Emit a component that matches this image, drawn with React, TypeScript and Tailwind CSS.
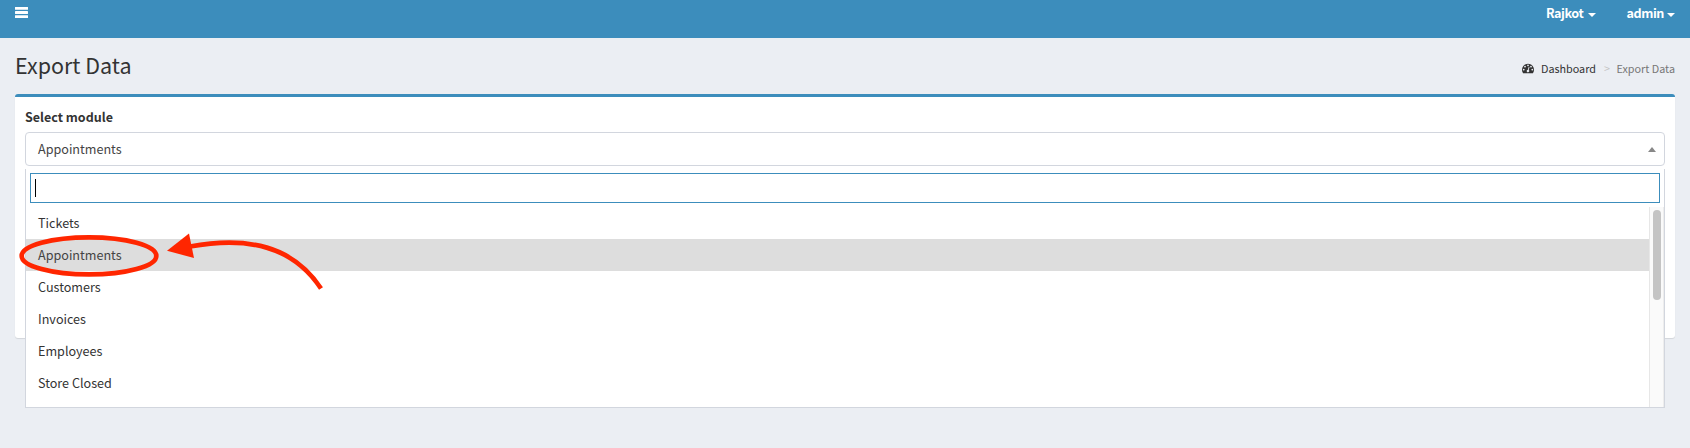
import React from "react";

const modules = ["Tickets", "Appointments", "Customers", "Invoices", "Employees", "Store Closed"];

function Caret({ className = "" }: { className?: string }) {
  return <span className={`inline-block h-0 w-0 border-x-4 border-t-4 border-x-transparent border-t-white ${className}`} />;
}

function MenuIcon() {
  return (
    <svg viewBox="0 0 13 11" className="mt-[7px] h-[11px] w-[13px]" fill="currentColor">
      <rect width="13" height="2.800" rx="0.300" />
      <rect y="4.100" width="13" height="2.800" rx="0.300" />
      <rect y="8.200" width="13" height="2.800" rx="0.300" />
    </svg>
  );
}

function DashboardIcon() {
  return (
    <svg viewBox="0 0 1792 1792" className="h-3 w-3" fill="currentColor">
      <path d="M384 1152q0-53-37.500-90.500t-90.500-37.500-90.500 37.500-37.500 90.500 37.500 90.500 90.500 37.500 90.500-37.500 37.500-90.500zm192-448q0-53-37.500-90.500t-90.500-37.500-90.500 37.500-37.500 90.500 37.500 90.500 90.500 37.500 90.500-37.500 37.500-90.500zm428 481l101-382q6-26-7.500-48.500t-38.500-29.500-48 6.500-30 39.500l-101 382q-60 5-107 43.500t-63 98.500q-20 77 20 146t117 89 146-20 89-117q16-60-6-117t-72-91zm660-33q0-53-37.500-90.500t-90.500-37.500-90.500 37.500-37.500 90.500 37.500 90.500 90.500 37.500 90.500-37.500 37.500-90.500zm-640-640q0-53-37.500-90.500t-90.500-37.500-90.500 37.500-37.500 90.500 37.500 90.500 90.500 37.500 90.500-37.500 37.500-90.500zm448 192q0-53-37.500-90.500t-90.500-37.500-90.500 37.500-37.500 90.500 37.500 90.500 90.500 37.500 90.500-37.500 37.500-90.500zm320 448q0 261-141 483-19 29-54 29h-1402q-35 0-54-29-141-221-141-483 0-182 71-348t191-286 286-191 348-71 348 71 286 191 191 286 71 348z" />
    </svg>
  );
}

function Annotation() {
  return (
    <svg className="pointer-events-none absolute left-0 top-[220px] h-20 w-[340px]" viewBox="0 220 340 80" fill="none" stroke="#ff2600">
      <ellipse cx="89" cy="255.900" rx="67.300" ry="18.500" strokeWidth="4.700" />
      <path d="M190 246.500C248 236 293 246 321 288.500" strokeWidth="4.700" />
      <path d="M167 250.800L189 233.600L194 258Z" fill="#ff2600" stroke="none" />
    </svg>
  );
}

export default function App() {
  return (
    <div className="relative h-[448px] w-[1690px] overflow-hidden bg-[#ebeef3] font-['Noto_Sans_CJK_SC','Source_Sans_Pro',sans-serif] text-[12.600px] text-[#333]">
      <header className="flex h-[38px] items-start justify-between bg-[#3c8dbc] px-[15px] text-white">
        <MenuIcon />
        <nav className="flex font-bold leading-5">
          <span className="mt-[3px] flex items-center"><span className="tracking-[-0.4px]">Rajkot</span><Caret className="ml-[5px] mt-1" /></span>
          <span className="ml-[30px] mt-[3px] flex items-center"><span className="tracking-[-0.4px]">admin</span><Caret className="ml-[3px] mt-1" /></span>
        </nav>
      </header>

      <section className="flex h-14 items-start justify-between px-[15px]">
        <h1 className="mt-3.5 text-[21.500px] leading-[26px]">Export Data</h1>
        <div className="mt-[22px] flex items-center text-[10.800px] leading-4">
          <DashboardIcon />
          <span className="ml-[7px]">Dashboard</span>
          <span className="ml-2 mr-[6.500px] text-[#c4c4c4]">&gt;</span>
          <span className="text-[#777]">Export Data</span>
        </div>
      </section>

      <main className="relative mx-[15px] h-[244px] rounded-[3px] border-t-[3px] border-[#3c8dbc] bg-white px-2.5 pt-2.5 shadow-[0_1px_1px_rgba(0,0,0,0.1)]">
        <div className="mb-[5px] h-5 text-[12.500px] font-bold leading-5">Select module</div>
        <div className="flex h-[34px] items-center justify-between rounded border border-[#d2d6de] pl-3 pr-2">
          <span className="text-[#444]">Appointments</span>
          <span className="h-0 w-0 border-x-4 border-b-[5px] border-x-transparent border-b-[#888]" />
        </div>
        <div className="absolute left-2.5 right-2.5 top-[72px] h-[239px] border border-t-0 border-[#d2d6de] bg-white pt-1">
          <div className="mx-1 flex h-[30px] items-center border border-[#3c8dbc] pl-1">
            <span className="h-[18px] w-px bg-black" />
          </div>
          <div className="mt-1 flex h-[200px]">
            <ul className="min-w-0 flex-1 overflow-hidden">
              {modules.map((name) => (
                <li key={name} className={`flex h-8 items-center pl-3 ${name === "Appointments" ? "bg-[#ddd] text-[#444]" : ""}`}>
                  {name}
                </li>
              ))}
            </ul>
            <div className="w-[15px] border-l border-r border-l-[#e7e7e7] border-r-[#ededed] bg-[#fafafa] pl-[3px] pt-[3px]">
              <div className="h-[90px] w-2 rounded-full bg-[#c4c4c4]" />
            </div>
          </div>
        </div>
      </main>
      <Annotation />
    </div>
  );
}
